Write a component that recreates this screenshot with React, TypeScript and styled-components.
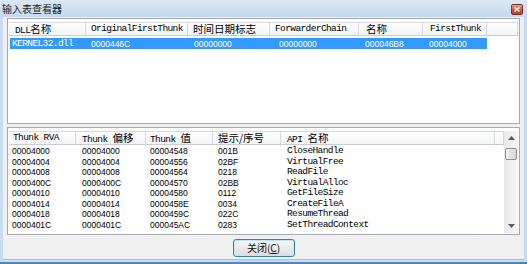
import styled, { createGlobalStyle } from 'styled-components'

const GlobalStyle = createGlobalStyle`
  html, body {
    margin: 0;
    padding: 0;
    background: #fff;
  }
  body {
    font-family: 'Liberation Sans', 'Noto Sans CJK SC', sans-serif;
  }
`

const Window = styled.div`
  width: 527px;
  height: 264px;
  box-sizing: border-box;
  display: flex;
  flex-direction: column;
  background: #c9dbef;
  border-bottom: 2px solid #4f86b9;
  overflow: hidden;
`

const TitleBar = styled.div`
  height: 17px;
  flex: none;
  display: flex;
  align-items: center;
  justify-content: space-between;
  padding: 0 4px 0 2px;
  background: linear-gradient(180deg, #dce8f5 0%, #c6d8ee 100%);
`

const Title = styled.span`
  font-family: 'Noto Sans CJK SC', sans-serif;
  font-size: 10px;
  line-height: 12px;
  color: #222;
`

const CloseBox = styled.div`
  width: 10px;
  height: 9px;
  margin-top: 1px;
  border: 1px solid #7b3022;
  border-radius: 2px;
  background: linear-gradient(180deg, #e6a592 0%, #c7553f 55%, #b8452f 100%);
  display: flex;
  align-items: center;
  justify-content: center;
`

const Client = styled.div`
  flex: 1;
  display: flex;
  flex-direction: column;
  margin: 0 3px 2px 3px;
  padding: 1px 4px 0 4px;
  background: #f0f0f0;
  border-bottom: 1px solid #a9bfd8;
`

const ListBox = styled.div<{ $height: number }>`
  height: ${p => p.$height}px;
  flex: none;
  box-sizing: border-box;
  border: 1px solid #a3aab3;
  background: #fff;
  padding: 3px 1px 1px 1px;
  display: flex;
`

const Table = styled.div`
  flex: 1;
  display: flex;
  flex-direction: column;
  min-width: 0;
`

const HeaderRow = styled.div<{ $cols: string }>`
  display: grid;
  grid-template-columns: ${p => p.$cols};
  height: 14px;
  box-sizing: border-box;
  border-top: 1px solid #d6d9de;
  border-bottom: 1px solid #c9cdd2;
  background: linear-gradient(180deg, #ffffff 0%, #f3f4f6 100%);
  margin-bottom: 1px;
`

const HeaderCell = styled.div<{ $pad?: number }>`
  padding-left: ${p => p.$pad ?? 5}px;
  border-right: 1px solid #d6d9de;
  font-family: 'Liberation Mono', 'Noto Sans CJK SC', monospace;
  font-size: 9.5px;
  line-height: 12px;
  letter-spacing: -0.6px;
  color: #000;
  white-space: pre;
`

const Cjk = styled.span`
  font-family: 'Noto Sans CJK SC', sans-serif;
  font-size: 10.5px;
  line-height: 12px;
  letter-spacing: 0;
`

const Row = styled.div<{ $cols: string; $selected?: boolean }>`
  display: grid;
  grid-template-columns: ${p => p.$cols};
  height: ${p => (p.$selected ? 11 : 10.5)}px;
  align-items: center;
  margin-left: ${p => (p.$selected ? 1 : 0)}px;
  margin-top: ${p => (p.$selected ? 1 : 0)}px;
  justify-self: start;
  width: max-content;
  background: ${p => (p.$selected ? '#3399ff' : 'transparent')};
  color: ${p => (p.$selected ? '#fff' : '#000')};
`

const Cell = styled.div<{ $mono?: boolean; $pad?: number }>`
  padding-left: ${p => p.$pad ?? 5}px;
  white-space: nowrap;
  font-family: ${p =>
    p.$mono ? "'Liberation Mono', monospace" : "'Liberation Sans', sans-serif"};
  font-size: ${p => (p.$mono ? 9.5 : 8.5)}px;
  letter-spacing: ${p => (p.$mono ? -0.6 : 0)}px;
  line-height: 10px;
`

const ScrollBar = styled.div`
  width: 14px;
  flex: none;
  display: flex;
  flex-direction: column;
  background: linear-gradient(90deg, #e9e9e9 0%, #f5f5f5 100%);
`

const ArrowButton = styled.div`
  height: 14px;
  flex: none;
  display: flex;
  align-items: center;
  justify-content: center;
`

const Thumb = styled.div`
  height: 12px;
  margin: 3px 1px 0 1px;
  box-sizing: border-box;
  border: 1px solid #8e8f8f;
  border-radius: 2px;
  background: linear-gradient(90deg, #f2f2f2 0%, #e3e3e3 50%, #d6d6d6 100%);
`

const Track = styled.div`
  flex: 1;
`

const Gap = styled.div`
  height: 3px;
  flex: none;
`

const ButtonBar = styled.div`
  flex: 1;
  display: flex;
  align-items: center;
  justify-content: center;
  padding-top: 2px;
`

const PushButton = styled.button`
  width: 62px;
  height: 18px;
  padding: 0;
  border: 1px solid #3c7fb1;
  border-radius: 3px;
  background: linear-gradient(180deg, #f7f7f7 0%, #ebebeb 50%, #dcdcdc 100%);
  box-shadow: inset 0 0 0 1px #c9e3f6;
  font-family: 'Noto Sans CJK SC', sans-serif;
  font-size: 10px;
  line-height: 14px;
  color: #111;
  u {
    text-decoration: underline;
  }
`

const topCols = '77px 102px 82px 89px 64px 64px 1fr'
const selCols = '76px 102px 82px 89px 64px 64px'
const lowCols = '67px 70px 67px 68px 214px 1fr'

const imports = [
  ['00004000', '00004000', '00004548', '001B', 'CloseHandle'],
  ['00004004', '00004004', '00004556', '02BF', 'VirtualFree'],
  ['00004008', '00004008', '00004564', '0218', 'ReadFile'],
  ['0000400C', '0000400C', '00004570', '02BB', 'VirtualAlloc'],
  ['00004010', '00004010', '00004580', '0112', 'GetFileSize'],
  ['00004014', '00004014', '0000458E', '0034', 'CreateFileA'],
  ['00004018', '00004018', '0000459C', '022C', 'ResumeThread'],
  ['0000401C', '0000401C', '000045AC', '0283', 'SetThreadContext'],
]

function Arrow({ up }: { up?: boolean }) {
  return (
    <svg width='7' height='4' viewBox='0 0 7 4'>
      <path d={up ? 'M0 4 L3.5 0 L7 4 Z' : 'M0 0 L3.5 4 L7 0 Z'} fill='#4d5a6e' />
    </svg>
  )
}

export default function App() {
  return (
    <>
      <GlobalStyle />
      <Window>
        <TitleBar>
          <Title>输入表查看器</Title>
          <CloseBox>
            <svg width='6' height='5' viewBox='0 0 6 5'>
              <path d='M0.5 0.5 L5.5 4.5 M5.5 0.5 L0.5 4.5' stroke='#fff' strokeWidth='1.3' />
            </svg>
          </CloseBox>
        </TitleBar>
        <Client>
          <ListBox $height={106}>
            <Table>
              <HeaderRow $cols={topCols}>
                <HeaderCell $pad={6}>DLL<Cjk>名称</Cjk></HeaderCell>
                <HeaderCell>OriginalFirstThunk</HeaderCell>
                <HeaderCell><Cjk>时间日期标志</Cjk></HeaderCell>
                <HeaderCell>ForwarderChain</HeaderCell>
                <HeaderCell $pad={7}><Cjk>名称</Cjk></HeaderCell>
                <HeaderCell $pad={7}>FirstThunk</HeaderCell>
                <HeaderCell />
              </HeaderRow>
              <Row $cols={selCols} $selected>
                <Cell $mono $pad={2}>KERNEL32.dll</Cell>
                <Cell>0000446C</Cell>
                <Cell $pad={6}>00000000</Cell>
                <Cell $pad={9}>00000000</Cell>
                <Cell $pad={6}>000046B8</Cell>
                <Cell $pad={6}>00004000</Cell>
              </Row>
            </Table>
          </ListBox>
          <Gap />
          <ListBox $height={108}>
            <Table>
              <HeaderRow $cols={lowCols}>
                <HeaderCell $pad={4}>Thunk RVA</HeaderCell>
                <HeaderCell $pad={6}>Thunk <Cjk>偏移</Cjk></HeaderCell>
                <HeaderCell $pad={4}>Thunk <Cjk>值</Cjk></HeaderCell>
                <HeaderCell><Cjk>提示/序号</Cjk></HeaderCell>
                <HeaderCell $pad={6}>API <Cjk>名称</Cjk></HeaderCell>
                <HeaderCell />
              </HeaderRow>
              {imports.map(r => (
                <Row key={r[0]} $cols={lowCols}>
                  <Cell $pad={3}>{r[0]}</Cell>
                  <Cell $pad={6}>{r[1]}</Cell>
                  <Cell $pad={4}>{r[2]}</Cell>
                  <Cell>{r[3]}</Cell>
                  <Cell $mono $pad={6}>{r[4]}</Cell>
                  <Cell />
                </Row>
              ))}
            </Table>
            <ScrollBar>
              <ArrowButton><Arrow up /></ArrowButton>
              <Thumb />
              <Track />
              <ArrowButton><Arrow /></ArrowButton>
            </ScrollBar>
          </ListBox>
          <ButtonBar>
            <PushButton>关闭(<u>C</u>)</PushButton>
          </ButtonBar>
        </Client>
      </Window>
    </>
  )
}
